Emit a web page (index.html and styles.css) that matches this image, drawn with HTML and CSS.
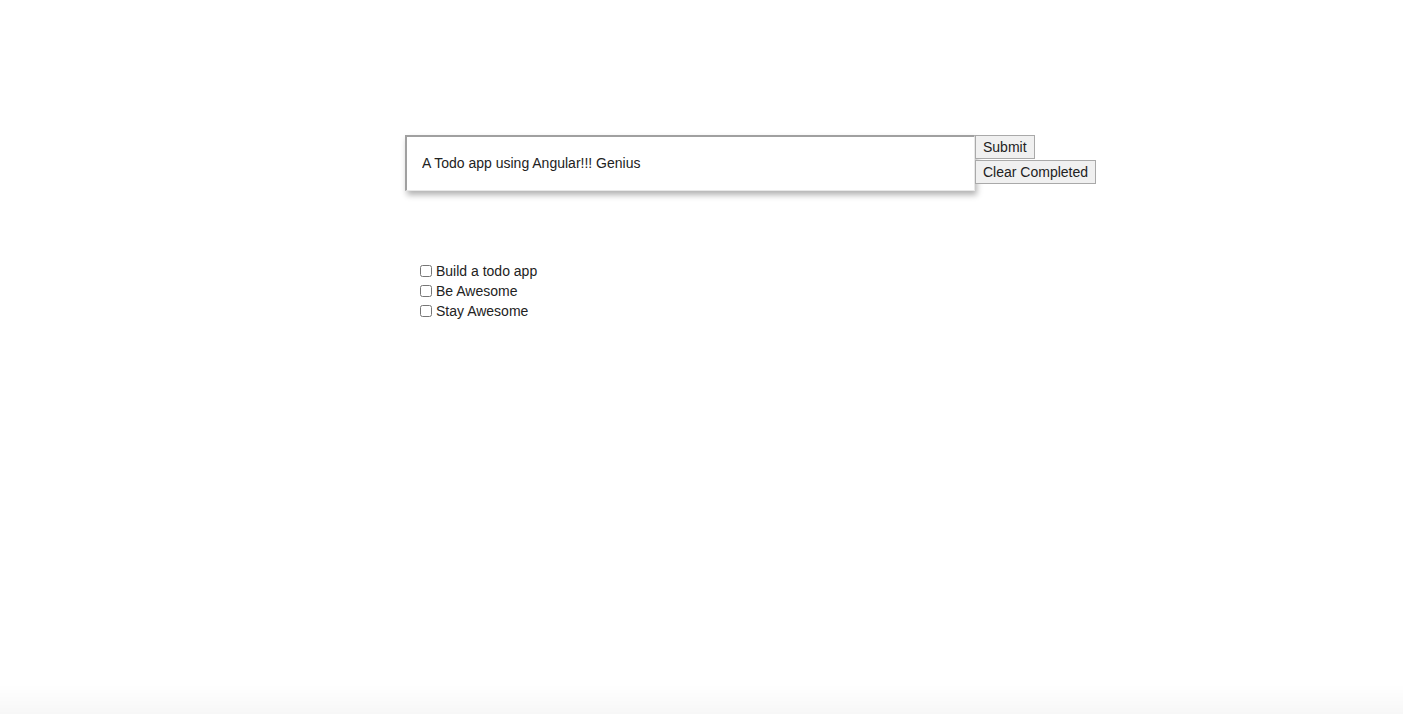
FILE: index.html
```html
<!DOCTYPE html>
<html lang="en">
<head>
  <meta charset="UTF-8" />
  <title>Todo</title>
  <link rel="stylesheet" href="styles.css">
</head>
<body>

  <main class="app">
    <form class="entry">
      <input type="text" class="todo-input" value="A Todo app using Angular!!! Genius">
      <div class="actions">
        <button type="button">Submit</button>
        <button type="button">Clear Completed</button>
      </div>
    </form>

    <ul class="todos">
      <li><label><input type="checkbox">Build a todo app</label></li>
      <li><label><input type="checkbox">Be Awesome</label></li>
      <li><label><input type="checkbox">Stay Awesome</label></li>
    </ul>
  </main>

  <div class="fade"></div>

</body>
</html>
```

FILE: styles.css
```css
body {
  margin: 0;
  background: #fff;
  color: #222;
  font-family: 'Liberation Sans', Arial, sans-serif;
  font-size: 14px;
}

.app {
  padding: 135px 0 0 405px;
}

.entry {
  display: flex;
  align-items: flex-start;
}

.todo-input {
  box-sizing: border-box;
  width: 570px;
  height: 56px;
  padding: 0 15px 2px;
  border: 1px solid #a0a0a0;
  border-left-width: 2px;
  border-top-width: 2px;
  border-right-color: #e8e8e8;
  border-bottom-color: #e8e8e8;
  box-shadow: 2px 4px 6px rgba(0,0,0,0.3);
  font-family: inherit;
  font-size: 14px;
  color: #222;
  outline: none;
}

.actions {
  display: flex;
  flex-direction: column;
  align-items: flex-start;
  gap: 1px;
}

.actions button {
  height: 24px;
  padding: 0 7px;
  background: #f0f0f0;
  border: 1px solid #a9a9a9;
  border-radius: 0;
  font-family: inherit;
  font-size: 14px;
  color: #222;
}

.todos {
  list-style: none;
  margin: 70px 0 0;
  padding: 0 0 0 14px;
}

.todos li {
  height: 20px;
  line-height: 20px;
}

.todos input {
  width: 12px;
  height: 12px;
  margin: 0 4px 0 1px;
  vertical-align: -1px;
}

.fade {
  position: fixed;
  left: 0;
  right: 0;
  bottom: 0;
  height: 30px;
  background: linear-gradient(to bottom, rgba(0,0,0,0), rgba(0,0,0,0.03));
  pointer-events: none;
}
```
